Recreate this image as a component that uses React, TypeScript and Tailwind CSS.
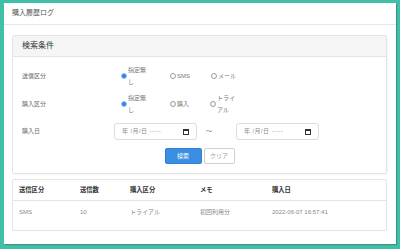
import React from "react";

const font = { fontFamily: '"Liberation Sans", "Noto Sans CJK JP", sans-serif' };

function Radio({ checked, label }: { checked?: boolean; label: string }) {
  return (
    <div className="flex items-center gap-[1px] mr-[21px]">
      {checked ? (
        <span className="block w-[6px] h-[6px] rounded-full bg-[#2f7fe6] border border-[#9cc3f5] shrink-0" />
      ) : (
        <span className="block w-[6px] h-[6px] rounded-full bg-white border border-[#9a9a9a] shrink-0" />
      )}
      <span className="max-w-[21px] text-[6px] leading-[12px] text-[#777]">{label}</span>
    </div>
  );
}

function CalIcon() {
  return (
    <svg width="6" height="6" viewBox="0 0 6 6">
      <rect x="0.5" y="0.5" width="5" height="5" fill="none" stroke="#333" strokeWidth="1" />
      <rect x="0.5" y="0.5" width="5" height="1.5" fill="#333" />
    </svg>
  );
}

function DateBox() {
  return (
    <div className="w-[83px] h-[17px] rounded-[3px] border border-[#dcdcdc] bg-white flex items-center pl-[7px] pr-[7px] justify-between">
      <span className="text-[6px] tracking-[0.4px] text-[#888] whitespace-nowrap">年 /月/日 --:--</span>
      <CalIcon />
    </div>
  );
}

export default function App() {
  return (
    <div className="w-[400px] h-[249px] bg-[#41bfa8] pt-[3px] pl-[4px] pr-[4px] pb-[5px]" style={font}>
      <div className="w-[392px] h-[241px] bg-white shadow-[1px_1px_1px_rgba(0,0,0,0.2)]">
        <div className="h-[22px] border-b border-[#e8e8e8] flex items-center pl-[8px]">
          <span className="text-[7px] text-[#555]">購入履歴ログ</span>
        </div>
        <div className="pl-[8px] pr-[9px]">
          <div className="mt-[10px] border border-[#e4e4e4] rounded-[2px] shadow-[1px_1px_1px_rgba(0,0,0,0.04)]">
            <div className="h-[21px] bg-[#f5f5f5] border-b border-[#e4e4e4] flex items-center pl-[9px]">
              <span className="text-[8px] text-[#333]">検索条件</span>
            </div>
            <div className="pt-[5px] pb-[9px] pl-[9px]">
              <div className="h-[28px] flex items-center">
                <div className="w-[92px] text-[6px] text-[#666]">送信区分</div>
                <div className="flex items-center pl-[7px]">
                  <Radio checked label="指定無し" />
                  <Radio label="SMS" />
                  <Radio label="メール" />
                </div>
              </div>
              <div className="h-[28px] flex items-center">
                <div className="w-[92px] text-[6px] text-[#666]">購入区分</div>
                <div className="flex items-center pl-[7px]">
                  <Radio checked label="指定無し" />
                  <Radio label="購入" />
                  <Radio label="トライアル" />
                </div>
              </div>
              <div className="h-[27px] flex items-center">
                <div className="w-[92px] text-[6px] text-[#666]">購入日</div>
                <DateBox />
                <span className="ml-[9px] mr-[24px] text-[6px] text-[#777]">〜</span>
                <DateBox />
              </div>
              <div className="mt-[3px] flex justify-center gap-[2px] pr-[9px]">
                <div className="w-[37px] h-[16px] rounded-[2px] bg-[#3a8fe3] border border-[#2f7fd0] flex items-center justify-center text-[6px] text-white">
                  検索
                </div>
                <div className="w-[31px] h-[16px] rounded-[2px] bg-white border border-[#cfcfcf] flex items-center justify-center text-[6px] text-[#999]">
                  クリア
                </div>
              </div>
            </div>
          </div>
          <div className="mt-[5px] border border-[#e4e4e4] rounded-[2px] pb-[7px]">
            <div className="h-[21px] border-b border-[#e4e4e4] grid grid-cols-[61px_50px_70px_72px_1fr] items-center pl-[6px] text-[6.3px] font-bold text-[#333]">
              <span>送信区分</span>
              <span>送信数</span>
              <span>購入区分</span>
              <span>メモ</span>
              <span>購入日</span>
            </div>
            <div className="h-[22px] grid grid-cols-[61px_50px_70px_72px_1fr] items-center pl-[6px] text-[6px] text-[#888]">
              <span>SMS</span>
              <span>10</span>
              <span>トライアル</span>
              <span>初回利用分</span>
              <span>2022-06-07 16:57:41</span>
            </div>
          </div>
        </div>
      </div>
    </div>
  );
}
